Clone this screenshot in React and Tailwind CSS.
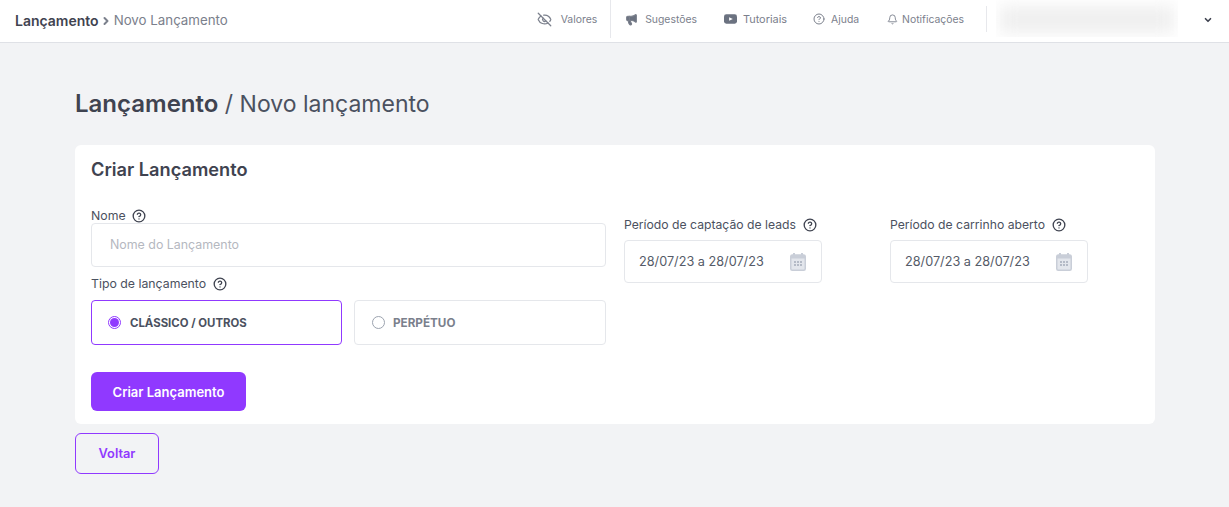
import { ChevronDown, ChevronRight, EyeOff, Megaphone, CircleHelp, Bell } from "lucide-react";

const font = "font-['Inter','Noto_Sans',sans-serif]";

const Help = ({ className = "" }) => (
  <CircleHelp className={`w-[14px] h-[14px] text-[#3f4350] ${className}`} strokeWidth={2.25} />
);

// youtube style play badge
const PlayIcon = () => (
  <svg viewBox="0 0 14 10" className="w-[13px] h-[10px]">
    <rect width="14" height="10" rx="2.5" fill="#6b7280" />
    <path d="M5.5 3l4 2-4 2z" fill="#fff" />
  </svg>
);

const Calendar = () => (
  <svg viewBox="0 0 16 18" className="w-[16px] h-[18px]">
    <path d="M3 0h2v3H3zM11 0h2v3h-2z" fill="#c9ced8" />
    <rect x="0.75" y="2" width="14.5" height="15.25" rx="1.5" fill="#e3e6ec" stroke="#c9ced8" strokeWidth="1.5" />
    <rect x="1" y="2" width="14" height="3.5" fill="#c9ced8" />
    <path d="M4 8h2v2H4zM7 8h2v2H7zM10 8h2v2h-2zM4 11h2v2H4zM7 11h2v2H7zM10 11h2v2h-2z" fill="#b4bac6" />
  </svg>
);

const TopItem = ({ icon, label, className = "" }) => (
  <div className={`flex items-center pb-[3px] text-[10.4px] text-[#7b808c] ${className}`}>
    {icon}
    <span>{label}</span>
  </div>
);

const DateField = ({ label, className = "" }) => (
  <div className={`w-[198px] pt-[7px] ${className}`}>
    <div className="flex items-center gap-[7px] h-[24px] text-[12.2px] text-[#4b5160]">
      <span>{label}</span>
      <Help />
    </div>
    <div className="mt-[3px] h-[43px] bg-white border border-[#e5e7eb] rounded flex items-center justify-between pl-[14px] pr-[15px] text-[12.7px] text-[#555b68]">
      <span>28/07/23 a 28/07/23</span>
      <Calendar />
    </div>
  </div>
);

export default function App() {
  return (
    <div className={`h-[507px] overflow-hidden bg-[#f2f3f5] ${font}`}>
      {/* Topbar */}
      <header className="h-[43px] bg-white border-b border-[#dfe1e6] flex items-center pl-[15px]">
        <div className="flex items-center text-[13.3px]">
          <span className="pb-[1px] text-[14px] font-semibold text-[#3f4350]">Lançamento</span>
          <ChevronRight className="w-[12px] h-[12px] ml-[1px] mr-[1px] text-[#7b808c]" strokeWidth={4} />
          <span className="text-[#7b808c] ml-[1px]">Novo Lançamento</span>
        </div>

        <div className="ml-auto flex items-center h-full">
          <TopItem icon={<EyeOff className="w-[15px] h-[15px] mr-[9px]" />} label="Valores" className="pr-[13px]" />
          <div className="w-px h-[38px] mb-[4px] bg-[#e7e8ec] mr-[14px]" />
          <TopItem icon={<Megaphone className="w-[13px] h-[13px] mr-[7px] fill-[#6b7280]" />} label="Sugestões" className="mr-[27px]" />
          <TopItem icon={<PlayIcon />} label={<span className="ml-[6px] text-[10.9px]">Tutoriais</span>} className="mr-[26px]" />
          <TopItem icon={<CircleHelp className="w-[12px] h-[12px] mr-[6px]" />} label="Ajuda" className="mr-[28px]" />
          <TopItem icon={<Bell className="w-[11px] h-[11px] mr-[4px]" />} label="Notificações" />
          <div className="w-px h-[26px] mb-[4px] bg-[#e7e8ec] ml-[22px] mr-[9px]" />
          <div className="w-[182px] h-[37px] mb-[6px] overflow-hidden">
            <div className="mx-[4px] my-[6px] h-[27px] bg-[#efefef] blur-[8px]" />
          </div>
          <ChevronDown className="w-[10px] h-[10px] mb-[3px] ml-[25px] mr-[16px] text-[#3f4350]" strokeWidth={4} />
        </div>
      </header>

      <main className="pl-[75px] w-[1155px]">
        <h1 className="mt-[45px] h-[32px] leading-[32px] text-[23px] text-[#4b5160]">
          <span className="text-[24px] font-semibold text-[#3f4350]">Lançamento</span> / Novo lançamento
        </h1>

        {/* Card */}
        <section className="mt-[25px] h-[279px] bg-white rounded-md px-[16px] pt-[13px]">
          <h2 className="h-[22px] leading-[22px] text-[18.2px] font-semibold text-[#3f4350]">Criar Lançamento</h2>

          <div className="flex mt-[26px]">
            <div className="w-[515px]">
              <div className="flex items-center gap-[6px] h-[20px] text-[12.3px] text-[#4b5160]">
                <span>Nome</span>
                <Help />
              </div>
              <input
                placeholder="Nome do Lançamento"
                className="block w-full h-[44px] mt-[-3px] pb-[2px] bg-white border border-[#e5e7eb] rounded px-[18px] text-[12.4px] outline-none placeholder:text-[#b5b8bf]"
              />
              <div className="flex items-center gap-[7px] h-[20px] mt-[7px] text-[12.3px] text-[#4b5160]">
                <span>Tipo de lançamento</span>
                <Help />
              </div>
              <div className="flex gap-[12px] mt-[6px]">
                <div className="w-[251px] h-[45px] border border-[#9039ff] rounded flex items-center pl-[16px] gap-[9px]">
                  <span className="w-[13px] h-[13px] rounded-full border border-[#9039ff] flex items-center justify-center">
                    <span className="w-[9px] h-[9px] rounded-full bg-[#9039ff]" />
                  </span>
                  <span className="pt-[2px] text-[11.4px] font-bold text-[#4b5160]">CLÁSSICO / OUTROS</span>
                </div>
                <div className="w-[252px] h-[45px] border border-[#e5e7eb] rounded flex items-center pl-[17px] gap-[8px]">
                  <span className="w-[13px] h-[13px] rounded-full border border-[#9ca3af]" />
                  <span className="pt-[2px] text-[11.7px] font-bold text-[#7b808c]">PERPÉTUO</span>
                </div>
              </div>
              <button className="mt-[27px] pt-[2px] w-[155px] h-[39px] bg-[#9039ff] rounded-md text-white text-[13px] font-semibold">
                Criar Lançamento
              </button>
            </div>

            <DateField label="Período de captação de leads" className="ml-[18px]" />
            <DateField label="Período de carrinho aberto" className="ml-[68px]" />
          </div>
        </section>

        <button className="block mt-[9px] pt-[1px] w-[84px] h-[41px] border border-[#9039ff] rounded-md text-[#9039ff] text-[12.8px] font-semibold">
          Voltar
        </button>
      </main>
    </div>
  );
}
